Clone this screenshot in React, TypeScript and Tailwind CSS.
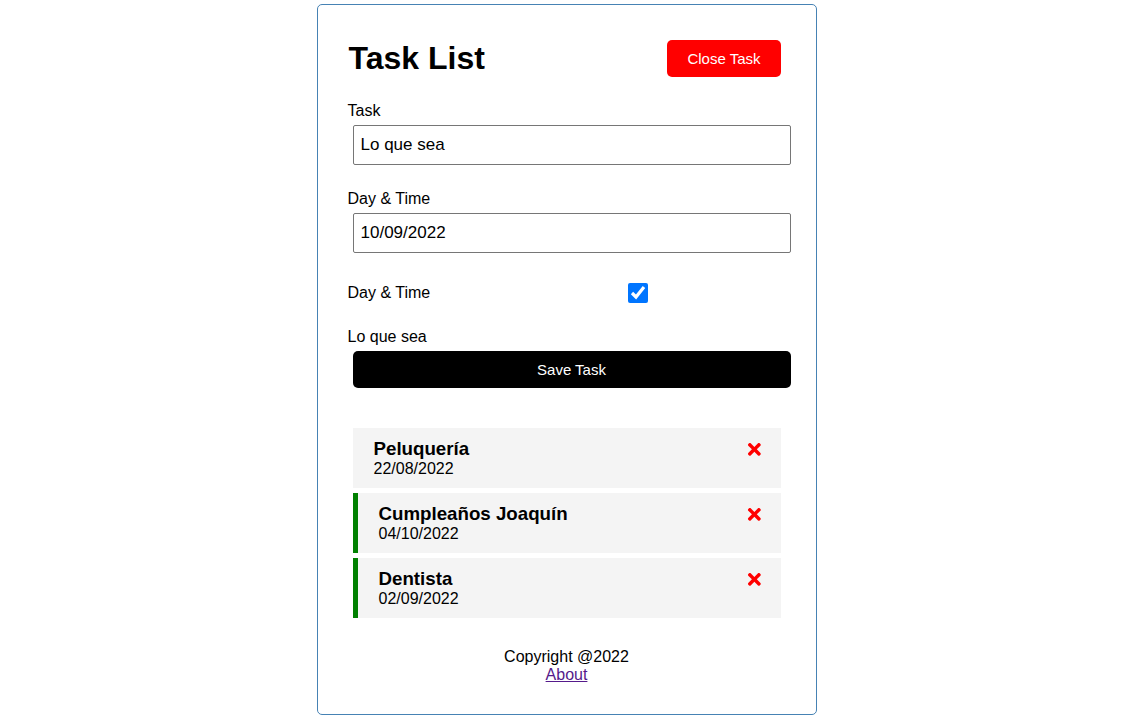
import React from "react";
import { FaTimes } from "react-icons/fa";

const tasks = [
  { id: 1, text: "Peluquería", day: "22/08/2022", reminder: false },
  { id: 2, text: "Cumpleaños Joaquín", day: "04/10/2022", reminder: true },
  { id: 3, text: "Dentista", day: "02/09/2022", reminder: true },
];

export default function App() {
  return (
    <div
      className="min-h-[718px] bg-white pt-[4px] text-black leading-[normal]"
      style={{ fontFamily: '"Liberation Sans", Arial, sans-serif' }}
    >
      <div className="mx-auto w-[500px] rounded-[5px] border border-[#4682b4] p-[30px]">
        <header className="mb-[20px] flex items-center justify-between">
          <h1 className="pl-[1px] text-[32px] font-bold">Task List</h1>
          <button className="m-[5px] h-[37px] rounded-[5px] bg-[#ff0000] px-[20px] text-[15px] text-white">
            Close Task
          </button>
        </header>

        <form className="mb-[40px]">
          <div className="flow-root text-[16px]">
            <label className="block">Task</label>
            <input
              type="text"
              defaultValue="Lo que sea"
              className="m-[5px] block h-[40px] w-full rounded-[2px] border border-[#767676] px-[7px] py-[3px] text-[17px]"
            />
          </div>
          <div className="mt-[20px] flow-root text-[16px]">
            <label className="block">Day &amp; Time</label>
            <input
              type="text"
              defaultValue="10/09/2022"
              className="m-[5px] block h-[40px] w-full rounded-[2px] border border-[#767676] px-[7px] py-[3px] text-[17px]"
            />
          </div>
          <div className="mt-[20px] flex items-center text-[16px]">
            <label className="w-[275px] shrink-0">Day &amp; Time</label>
            <input
              type="checkbox"
              defaultChecked
              className="m-[5px] h-[20px] w-[20px]"
            />
          </div>
          <div className="mt-[20px] text-[16px]">
            <label className="block">Lo que sea</label>
          </div>
          <button
            type="button"
            className="m-[5px] block h-[37px] w-full rounded-[5px] bg-black text-[15px] text-white"
          >
            Save Task
          </button>
        </form>

        <div className="flow-root">
          {tasks.map((t) => (
            <div
              key={t.id}
              className={
                "mx-[5px] mb-[5px] bg-[#f4f4f4] py-[10px] pl-[20px] pr-[17px] " +
                (t.reminder ? "border-l-[5px] border-[#008000]" : "")
              }
            >
              <h3 className="flex items-center justify-between pl-[1px] text-[18.72px] font-bold">
                {t.text}
                <FaTimes style={{ color: "red", cursor: "pointer" }} />
              </h3>
              <p className="pl-[1px] text-[16px]">{t.day}</p>
            </div>
          ))}
        </div>

        <footer className="mt-[25px] text-center text-[16px]">
          <p>Copyright @2022</p>
          <a href="#" className="text-[#551a8b] underline">
            About
          </a>
        </footer>
      </div>
    </div>
  );
}
